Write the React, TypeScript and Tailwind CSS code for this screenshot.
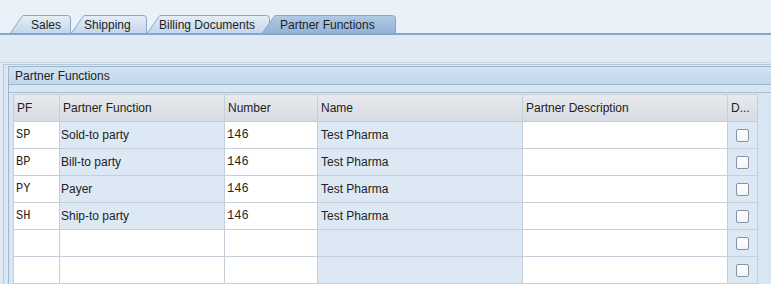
import React from "react";

type Tab = { label: string; width: number; pad: string; active?: boolean; overlap?: string };

const tabs: Tab[] = [
  { label: "Sales", width: 61, pad: "pl-[21px]" },
  { label: "Shipping", width: 76, pad: "pl-[13px]" },
  { label: "Billing Documents", width: 123, pad: "pl-[12px]" },
  { label: "Partner Functions", width: 134, pad: "pl-[18px]", active: true, overlap: "-ml-[8px]" },
];

const rows = [
  ["SP", "Sold-to party", "146", "Test Pharma"],
  ["BP", "Bill-to party", "146", "Test Pharma"],
  ["PY", "Payer", "146", "Test Pharma"],
  ["SH", "Ship-to party", "146", "Test Pharma"],
  ["", "", "", ""],
  ["", "", "", ""],
];

const sans = "font-['Liberation_Sans',Arial,sans-serif]";
const mono = "font-['Liberation_Mono','Courier_New',monospace]";

function TabShape({ width, active }: { width: number; active?: boolean }) {
  const w = width - 0.5;
  const d = `M0.5,18 L12,1.5 Q12.8,0.5 14,0.5 L${w - 3},0.5 Q${w},0.5 ${w},3.5 L${w},18`;
  const id = active ? "tabA" : "tabI";
  return (
    <svg className="absolute inset-0" width={width} height={18} viewBox={`0 0 ${width} 18`}>
      <defs>
        <linearGradient id="tabI" x1="0" y1="0" x2="0" y2="1">
          <stop offset="0" stopColor="#e6eef7" />
          <stop offset="1" stopColor="#c3d6ea" />
        </linearGradient>
        <linearGradient id="tabA" x1="0" y1="0" x2="0" y2="1">
          <stop offset="0" stopColor="#b1cae4" />
          <stop offset="1" stopColor="#93b3d7" />
        </linearGradient>
      </defs>
      <path d={d} fill={`url(#${id})`} stroke="#8aa6c6" strokeWidth="1" />
    </svg>
  );
}

function Checkbox() {
  return <div className="h-[13px] w-[13px] rounded-[2px] border border-[#8593a2] bg-gradient-to-b from-white to-[#f3f5f7]" />;
}

const cols = "grid grid-cols-[46px_165px_93px_205px_205px_30px]";
const cell = "h-[27px] border-r border-b border-[#c5cfd9] flex items-center text-[12px] text-[#222]";

export default function App() {
  return (
    <div className={`w-[771px] h-[284px] overflow-hidden bg-[#dfeaf5] ${sans}`}>
      <div className="bg-[#ebf1f8] pt-[15px] pl-[10px] flex">
        {tabs.map((t) => (
          <div
            key={t.label}
            className={`relative h-[18px] ${t.overlap ?? ""} ${t.active ? "z-10" : ""}`}
            style={{ width: t.width }}
          >
            <TabShape width={t.width} active={t.active} />
            <span className={`relative block ${t.pad} leading-[21px] text-[12px] text-[#1f1f1f]`}>{t.label}</span>
          </div>
        ))}
      </div>
      <div className="h-[2px] bg-[#86a5ca]" />
      <div className="h-[27px] bg-[#e0eaf5]" />
      <div className="h-px bg-[#cdd7e1]" />
      <div className="h-px bg-[#e3ecf5]" />
      <div className="ml-[3px] border-l border-t border-[#b7c8da] bg-[#dbe8f4] pl-[4px] pt-px">
        <div className="border-l border-t border-[#9db6d0]">
          <div className="h-[18px] border-b border-[#9db6d0] bg-gradient-to-b from-[#d3e3f2] to-[#c2d7eb] pl-[6px] text-[12px] leading-[18px] text-[#222]">
            Partner Functions
          </div>
          <div className="bg-[#d8e6f3] pt-[7px]">
            <div className="border-t border-[#a9bed4] pt-px pl-[4px]">
              <div className="w-fit border-l border-t border-[#c5cfd9]">
                <div className={cols}>
                  {["PF", "Partner Function", "Number", "Name", "Partner Description", "D..."].map((h) => (
                    <div key={h} className={`${cell} bg-gradient-to-b from-[#e7eaee] to-[#d7dce2] pl-[3px]`}>
                      {h}
                    </div>
                  ))}
                </div>
                {rows.map((r, i) => {
                  const filled = r[0] !== "";
                  return (
                    <div key={i} className={cols}>
                      <div className={`${cell} bg-white pl-[2px] ${mono}`}>{r[0]}</div>
                      <div className={`${cell} ${filled ? "bg-[#dce9f5]" : "bg-white"} pl-px`}>{r[1]}</div>
                      <div className={`${cell} bg-white pl-[2px] ${mono}`}>{r[2]}</div>
                      <div className={`${cell} bg-[#dce9f5] pl-[3px]`}>{r[3]}</div>
                      <div className={`${cell} bg-white`} />
                      <div className={`${cell} bg-[#dce9f5] justify-center`}>
                        <Checkbox />
                      </div>
                    </div>
                  );
                })}
              </div>
            </div>
          </div>
        </div>
      </div>
    </div>
  );
}
